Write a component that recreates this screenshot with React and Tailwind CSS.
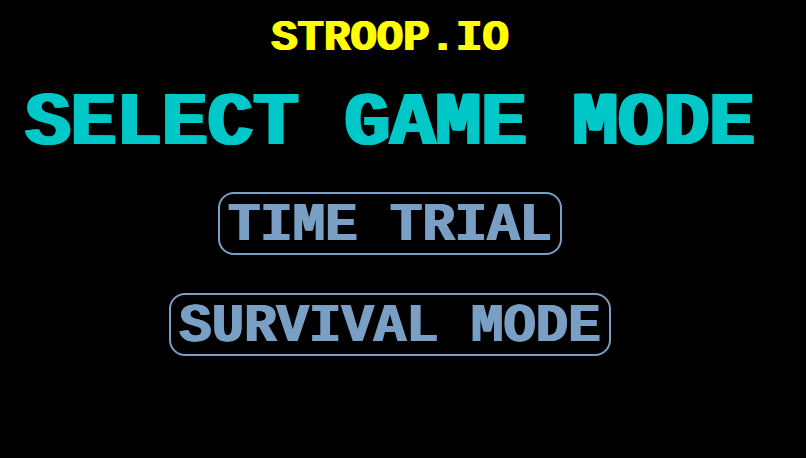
import { useState } from 'react';

const modes = [
  { id: 'time-trial', label: 'TIME TRIAL' },
  { id: 'survival', label: 'SURVIVAL MODE' },
];

function ModeButton({ label, active, onClick }) {
  return (
    <button
      type="button"
      aria-pressed={active}
      onClick={onClick}
      className="h-[63px] whitespace-nowrap rounded-2xl border-2 border-[#7a9fc4] px-2 pt-1 text-[54px] leading-none text-[#7a9fc4] [text-shadow:1px_0,-1px_0] hover:bg-[#7a9fc4]/20"
    >
      {label}
    </button>
  );
}

export default function App() {
  const [mode, setMode] = useState(null);

  return (
    <main className="flex min-h-screen flex-col items-center bg-black pt-3 pr-[26px] font-['Liberation_Mono',monospace] font-bold">
      <header className="text-[44px] leading-[52px] text-[#ffff00] [text-shadow:1px_0,-1px_0]">
        STROOP.IO
      </header>
      <h1 className="mt-5 whitespace-nowrap text-[76px] leading-[80px] text-[#00c8c8] [text-shadow:2px_0,-2px_0]">
        SELECT GAME MODE
      </h1>
      <div className="mt-7 flex flex-col items-center gap-[38px]">
        {modes.map((m) => (
          <ModeButton
            key={m.id}
            label={m.label}
            active={mode === m.id}
            onClick={() => setMode(m.id)}
          />
        ))}
      </div>
    </main>
  );
}
